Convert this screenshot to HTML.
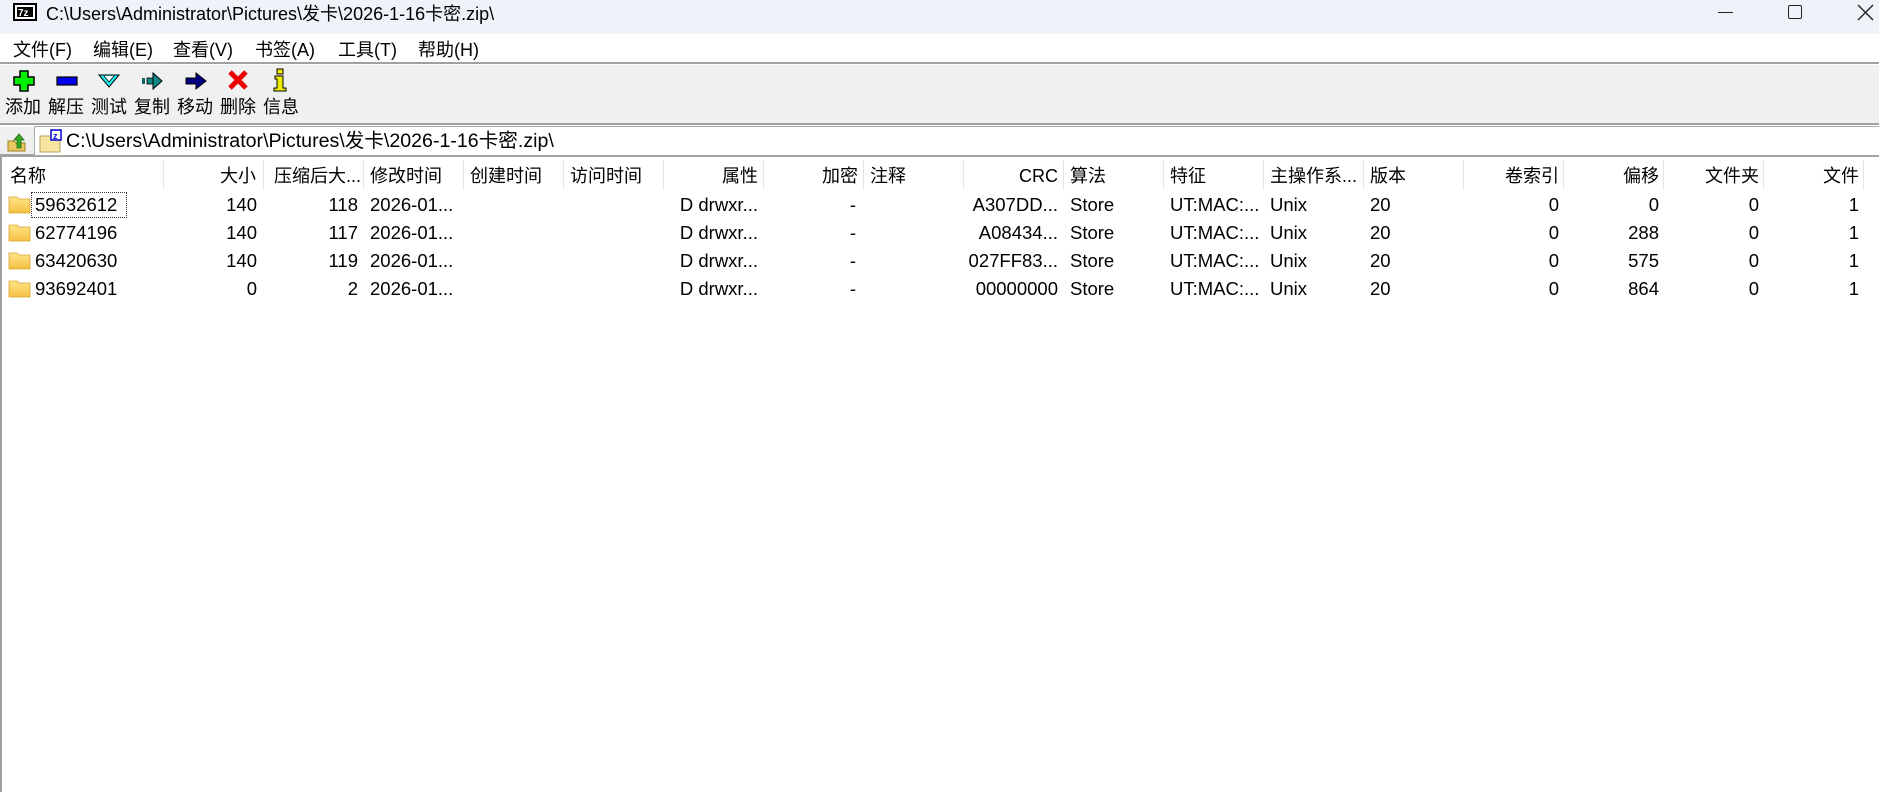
<!DOCTYPE html>
<html><head><meta charset="utf-8"><style>
*{margin:0;padding:0;box-sizing:border-box}
body{width:1879px;height:792px;overflow:hidden;background:#fff;font-family:"Liberation Sans","Noto Sans CJK SC",sans-serif;color:#000;position:relative}
.abs{position:absolute;white-space:nowrap}
#title{left:0;top:0;width:1879px;height:34px;background:#eef3f9}
#menu{left:0;top:34px;width:1879px;height:30px;background:#fff;border-bottom:2px solid #a0a0a0}
#tool{left:0;top:65px;width:1879px;height:60px;background:#f0f0f0;border-bottom:2px solid #a0a0a0}
#addr{left:0;top:127px;width:1879px;height:30px;background:#f0f0f0;border-bottom:3px solid #a0a0a0}
.m{top:38px;font-size:18px;line-height:24px}
.lbl{top:95px;font-size:18px;line-height:24px}
.hdr{top:164px;font-size:18px;height:24px;line-height:24px}
.cell{font-size:18.5px;line-height:24px}
.cell span{line-height:24px;top:0}
.sep{position:absolute;top:160px;width:1px;height:30px;background:#e5e5e5}
</style></head><body>
<div id="title" class="abs"></div>
<svg class="abs" style="left:13px;top:3px" width="24" height="18"><rect x="1" y="1" width="22" height="16" fill="#fff" stroke="#000" stroke-width="2"/><rect x="4" y="4" width="16" height="10" fill="#000"/><text x="5" y="13" font-size="10" font-weight="bold" fill="#fff" font-family="Liberation Sans">7z</text></svg>
<div class="abs" style="left:46px;top:2px;font-size:18px;line-height:24px">C:\Users\Administrator\Pictures\发卡\2026-1-16卡密.zip\</div>
<div class="abs" style="left:1718px;top:12px;width:15px;height:1px;background:#222"></div>
<div class="abs" style="left:1788px;top:5px;width:14px;height:14px;border:1.5px solid #222;border-radius:2px"></div>
<svg class="abs" style="left:1857px;top:4px" width="17" height="17"><path d="M1 1L16 16M16 1L1 16" stroke="#222" stroke-width="1.4"/></svg>

<div id="menu" class="abs"></div>
<div class="abs m" style="left:13px">文件(F)</div>
<div class="abs m" style="left:93px">编辑(E)</div>
<div class="abs m" style="left:173px">查看(V)</div>
<div class="abs m" style="left:255px">书签(A)</div>
<div class="abs m" style="left:338px">工具(T)</div>
<div class="abs m" style="left:418px">帮助(H)</div>

<div id="tool" class="abs"></div>
<svg class="abs" style="left:12px;top:69px" width="24" height="24"><path d="M8 2h8v6h6v8h-6v6H8v-6H2V8h6z" fill="#00ee00" stroke="#000" stroke-width="1.5"/></svg>
<svg class="abs" style="left:55px;top:74px" width="24" height="14"><rect x="2" y="3" width="20" height="8" fill="#0000ee" stroke="#000" stroke-width="1.2"/></svg>
<svg class="abs" style="left:97px;top:72px" width="24" height="18"><path d="M2 3h20L12 15z" fill="#22eeee" stroke="#000" stroke-width="1"/><path d="M7 4l5 6 5-6" fill="#fff" stroke="#000" stroke-width="0.8"/></svg>
<svg class="abs" style="left:141px;top:70px" width="24" height="22"><rect x="1" y="8" width="3" height="6" fill="#116666"/><rect x="6" y="8" width="6" height="6" fill="#118888" stroke="#000" stroke-width=".8"/><path d="M12 3l9 8-9 8z" fill="#118888" stroke="#000" stroke-width="1"/></svg>
<svg class="abs" style="left:184px;top:70px" width="24" height="22"><path d="M2 8h10V3l10 8-10 8v-5H2z" fill="#000080" stroke="#000" stroke-width="1"/></svg>
<svg class="abs" style="left:227px;top:69px" width="22" height="22"><path d="M3 3L19 19M19 3L3 19" stroke="#ee0000" stroke-width="5"/></svg>
<svg class="abs" style="left:273px;top:68px" width="14" height="24"><rect x="4" y="1" width="6" height="5" fill="#eeee00" stroke="#000"/><path d="M2 8h8v12h3v3H1v-3h3v-9H2z" fill="#eeee00" stroke="#000"/></svg>
<div class="abs lbl" style="left:5px">添加</div>
<div class="abs lbl" style="left:48px">解压</div>
<div class="abs lbl" style="left:91px">测试</div>
<div class="abs lbl" style="left:134px">复制</div>
<div class="abs lbl" style="left:177px">移动</div>
<div class="abs lbl" style="left:220px">删除</div>
<div class="abs lbl" style="left:263px">信息</div>

<div id="addr" class="abs"></div>
<svg class="abs" style="left:6px;top:131px" width="22" height="22"><path d="M2 10h6l2 2h9v8H2z" fill="#e8c860" stroke="#a08020"/><path d="M11 17V9H8l5-6 5 6h-3v8z" fill="#33aa22" stroke="#226611" stroke-width=".8"/></svg>
<div class="abs" style="left:34px;top:126px;width:1845px;height:30px;background:#fff;border:1px solid #aaa;border-right:none"></div>
<svg class="abs" style="left:38px;top:128px" width="26" height="26"><path d="M2 8h20v16H2z" fill="#f6e6a0" stroke="#b8a060"/><rect x="13" y="2" width="10" height="10" fill="#fff" stroke="#0000cc" stroke-width="1.5"/><text x="15" y="11" font-size="9" font-weight="bold" fill="#0000cc" font-family="Liberation Sans">z</text></svg>
<div class="abs" style="left:66px;top:129px;font-size:19.6px;line-height:24px">C:\Users\Administrator\Pictures\发卡\2026-1-16卡密.zip\</div>

<div class="abs" style="left:0;top:157px;width:2px;height:635px;background:#a0a0a0"></div>

<div class="sep" style="left:163px"></div><div class="sep" style="left:263px"></div><div class="sep" style="left:363px"></div><div class="sep" style="left:463px"></div><div class="sep" style="left:563px"></div><div class="sep" style="left:663px"></div><div class="sep" style="left:763px"></div><div class="sep" style="left:863px"></div><div class="sep" style="left:963px"></div><div class="sep" style="left:1063px"></div><div class="sep" style="left:1163px"></div><div class="sep" style="left:1263px"></div><div class="sep" style="left:1363px"></div><div class="sep" style="left:1463px"></div><div class="sep" style="left:1563px"></div><div class="sep" style="left:1663px"></div><div class="sep" style="left:1763px"></div><div class="sep" style="left:1863px"></div>

<div class="abs hdr" style="left:10px">名称</div>
<div class="abs hdr" style="right:1623px">大小</div>
<div class="abs hdr" style="left:274px">压缩后大...</div>
<div class="abs hdr" style="left:370px">修改时间</div>
<div class="abs hdr" style="left:470px">创建时间</div>
<div class="abs hdr" style="left:570px">访问时间</div>
<div class="abs hdr" style="right:1121px">属性</div>
<div class="abs hdr" style="right:1021px">加密</div>
<div class="abs hdr" style="left:870px">注释</div>
<div class="abs hdr" style="right:821px">CRC</div>
<div class="abs hdr" style="left:1070px">算法</div>
<div class="abs hdr" style="left:1170px">特征</div>
<div class="abs hdr" style="left:1270px">主操作系...</div>
<div class="abs hdr" style="left:1370px">版本</div>
<div class="abs hdr" style="right:320px">卷索引</div>
<div class="abs hdr" style="right:220px">偏移</div>
<div class="abs hdr" style="right:120px">文件夹</div>
<div class="abs hdr" style="right:20px">文件</div>

<div class="abs" style="left:31px;top:192px;width:96px;height:26px;border:1px dotted #333"></div>

<svg width="0" height="0" style="position:absolute"><defs><linearGradient id="fg" x1="0" y1="0" x2="0" y2="1"><stop offset="0" stop-color="#ffe48a"/><stop offset="1" stop-color="#f3c040"/></linearGradient></defs></svg>

<div class="abs cell" style="top:193px;left:0;width:1879px;height:24px">
<svg class="abs" style="left:8px;top:3px" width="23" height="18"><path d="M1 1h8l2 2h11v14H1z" fill="url(#fg)" stroke="#d9a530" stroke-width=".8"/></svg>
<span class="abs" style="left:35px">59632612</span><span class="abs" style="right:1622px">140</span><span class="abs" style="right:1521px">118</span><span class="abs" style="left:370px">2026-01...</span><span class="abs" style="right:1121px">D drwxr...</span><span class="abs" style="right:1023px">-</span><span class="abs" style="right:821px">A307DD...</span><span class="abs" style="left:1070px">Store</span><span class="abs" style="left:1170px">UT:MAC:...</span><span class="abs" style="left:1270px">Unix</span><span class="abs" style="left:1370px">20</span><span class="abs" style="right:320px">0</span><span class="abs" style="right:220px">0</span><span class="abs" style="right:120px">0</span><span class="abs" style="right:20px">1</span></div>
<div class="abs cell" style="top:221px;left:0;width:1879px;height:24px">
<svg class="abs" style="left:8px;top:3px" width="23" height="18"><path d="M1 1h8l2 2h11v14H1z" fill="url(#fg)" stroke="#d9a530" stroke-width=".8"/></svg>
<span class="abs" style="left:35px">62774196</span><span class="abs" style="right:1622px">140</span><span class="abs" style="right:1521px">117</span><span class="abs" style="left:370px">2026-01...</span><span class="abs" style="right:1121px">D drwxr...</span><span class="abs" style="right:1023px">-</span><span class="abs" style="right:821px">A08434...</span><span class="abs" style="left:1070px">Store</span><span class="abs" style="left:1170px">UT:MAC:...</span><span class="abs" style="left:1270px">Unix</span><span class="abs" style="left:1370px">20</span><span class="abs" style="right:320px">0</span><span class="abs" style="right:220px">288</span><span class="abs" style="right:120px">0</span><span class="abs" style="right:20px">1</span></div>
<div class="abs cell" style="top:249px;left:0;width:1879px;height:24px">
<svg class="abs" style="left:8px;top:3px" width="23" height="18"><path d="M1 1h8l2 2h11v14H1z" fill="url(#fg)" stroke="#d9a530" stroke-width=".8"/></svg>
<span class="abs" style="left:35px">63420630</span><span class="abs" style="right:1622px">140</span><span class="abs" style="right:1521px">119</span><span class="abs" style="left:370px">2026-01...</span><span class="abs" style="right:1121px">D drwxr...</span><span class="abs" style="right:1023px">-</span><span class="abs" style="right:821px">027FF83...</span><span class="abs" style="left:1070px">Store</span><span class="abs" style="left:1170px">UT:MAC:...</span><span class="abs" style="left:1270px">Unix</span><span class="abs" style="left:1370px">20</span><span class="abs" style="right:320px">0</span><span class="abs" style="right:220px">575</span><span class="abs" style="right:120px">0</span><span class="abs" style="right:20px">1</span></div>
<div class="abs cell" style="top:277px;left:0;width:1879px;height:24px">
<svg class="abs" style="left:8px;top:3px" width="23" height="18"><path d="M1 1h8l2 2h11v14H1z" fill="url(#fg)" stroke="#d9a530" stroke-width=".8"/></svg>
<span class="abs" style="left:35px">93692401</span><span class="abs" style="right:1622px">0</span><span class="abs" style="right:1521px">2</span><span class="abs" style="left:370px">2026-01...</span><span class="abs" style="right:1121px">D drwxr...</span><span class="abs" style="right:1023px">-</span><span class="abs" style="right:821px">00000000</span><span class="abs" style="left:1070px">Store</span><span class="abs" style="left:1170px">UT:MAC:...</span><span class="abs" style="left:1270px">Unix</span><span class="abs" style="left:1370px">20</span><span class="abs" style="right:320px">0</span><span class="abs" style="right:220px">864</span><span class="abs" style="right:120px">0</span><span class="abs" style="right:20px">1</span></div>
</body></html>
